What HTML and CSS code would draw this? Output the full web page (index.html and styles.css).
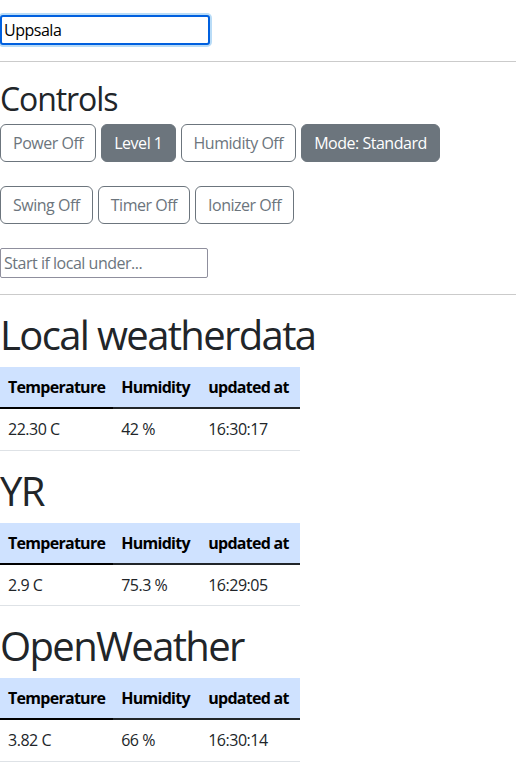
FILE: index.html
```html
<!DOCTYPE html>
<html lang="en">
<head>
<meta charset="utf-8">
<title>Weather control</title>
<link rel="stylesheet" href="styles.css">
</head>
<body>
<div class="page">
  <input class="city-input is-focused" type="text" value="Uppsala">
  <hr class="divider">
  <h2 class="section-title">Controls</h2>
  <div class="btn-row">
    <button class="btn btn-outline">Power Off</button>
    <button class="btn btn-solid">Level 1</button>
    <button class="btn btn-outline">Humidity Off</button>
    <button class="btn btn-solid">Mode: Standard</button>
  </div>
  <div class="btn-row">
    <button class="btn btn-outline">Swing Off</button>
    <button class="btn btn-outline">Timer Off</button>
    <button class="btn btn-outline">Ionizer Off</button>
  </div>
  <input class="threshold-input" type="text" placeholder="Start if local under...">
  <hr class="divider">

  <h1 class="source-title">Local weatherdata</h1>
  <table class="data-table">
    <thead><tr><th class="first">Temperature</th><th>Humidity</th><th>updated at</th></tr></thead>
    <tbody><tr><td>22.30 C</td><td>42 %</td><td>16:30:17</td></tr></tbody>
  </table>

  <h1 class="source-title">YR</h1>
  <table class="data-table">
    <thead><tr><th class="first">Temperature</th><th>Humidity</th><th>updated at</th></tr></thead>
    <tbody><tr><td>2.9 C</td><td>75.3 %</td><td>16:29:05</td></tr></tbody>
  </table>

  <h1 class="source-title">OpenWeather</h1>
  <table class="data-table">
    <thead><tr><th class="first">Temperature</th><th>Humidity</th><th>updated at</th></tr></thead>
    <tbody><tr><td>3.82 C</td><td>66 %</td><td>16:30:14</td></tr></tbody>
  </table>
</div>
</body>
</html>
```
FILE: styles.css
```css
* { box-sizing: border-box; }
html, body { margin: 0; padding: 0; }
body {
  font-family: "Open Sans", "Noto Sans", sans-serif;
  font-size: 16px;
  line-height: 1.5;
  letter-spacing: -0.03em;
  color: #212529;
  background: #fff;
}
.page { padding-top: 15px; }

.city-input, .threshold-input {
  display: block;
  width: 208px;
  height: 30px;
  font-family: inherit;
  font-size: 16px;
  letter-spacing: inherit;
  line-height: 22px;
  padding: 3px 3px;
  border: 1px solid #8f8f9d;
  border-radius: 2px;
  color: #000;
  background: #fff;
  margin: 0;
}
.city-input.is-focused {
  width: 210px;
  border: 2px solid #0060df;
  border-radius: 3px;
  box-shadow: 0 0 0 2px #b9dcf7;
  outline: none;
  padding: 2px 2px;
}
.threshold-input::placeholder { color: #6c757d; opacity: 1; }

.divider {
  border: 0;
  border-top: 1px solid #cbcbcb;
  margin: 16px 0;
  height: 0;
}

.section-title {
  font-size: 32px;
  font-weight: 400;
  line-height: 1.2;
  letter-spacing: -0.034em;
  margin: 0 0 8px;
  padding-top: 2px;
  height: 38px;
}
.source-title {
  font-size: 40px;
  font-weight: 400;
  line-height: 1.2;
  letter-spacing: -0.041em;
  margin: 0 0 8px;
}

.btn-row {
  display: flex;
  gap: 5px;
  margin-bottom: 24px;
}
.btn {
  font-family: inherit;
  font-size: 16px;
  letter-spacing: inherit;
  line-height: 24px;
  padding: 6px 12px;
  border: 1px solid #6c757d;
  border-radius: 6px;
  cursor: pointer;
}
.btn-outline { background: #fff; color: #6c757d; }
.btn-solid { background: #6c757d; color: #fff; }

.data-table {
  border-collapse: collapse;
  width: 300px;
  margin-bottom: 16px;
}
.data-table th, .data-table td {
  padding: 8px;
  text-align: left;
  white-space: nowrap;
}
.data-table th {
  background: #cfe2ff;
  color: #000;
  font-weight: 700;
  letter-spacing: -0.045em;
  border-bottom: 2px solid #212529;
}
.data-table th.first { border-bottom-color: #000; }
.data-table td {
  border-bottom: 1px solid #dee2e6;
  height: 42px;
}
.data-table th:nth-child(1), .data-table td:nth-child(1) { width: 113px; }
.data-table th:nth-child(2), .data-table td:nth-child(2) { width: 87px; }
```
